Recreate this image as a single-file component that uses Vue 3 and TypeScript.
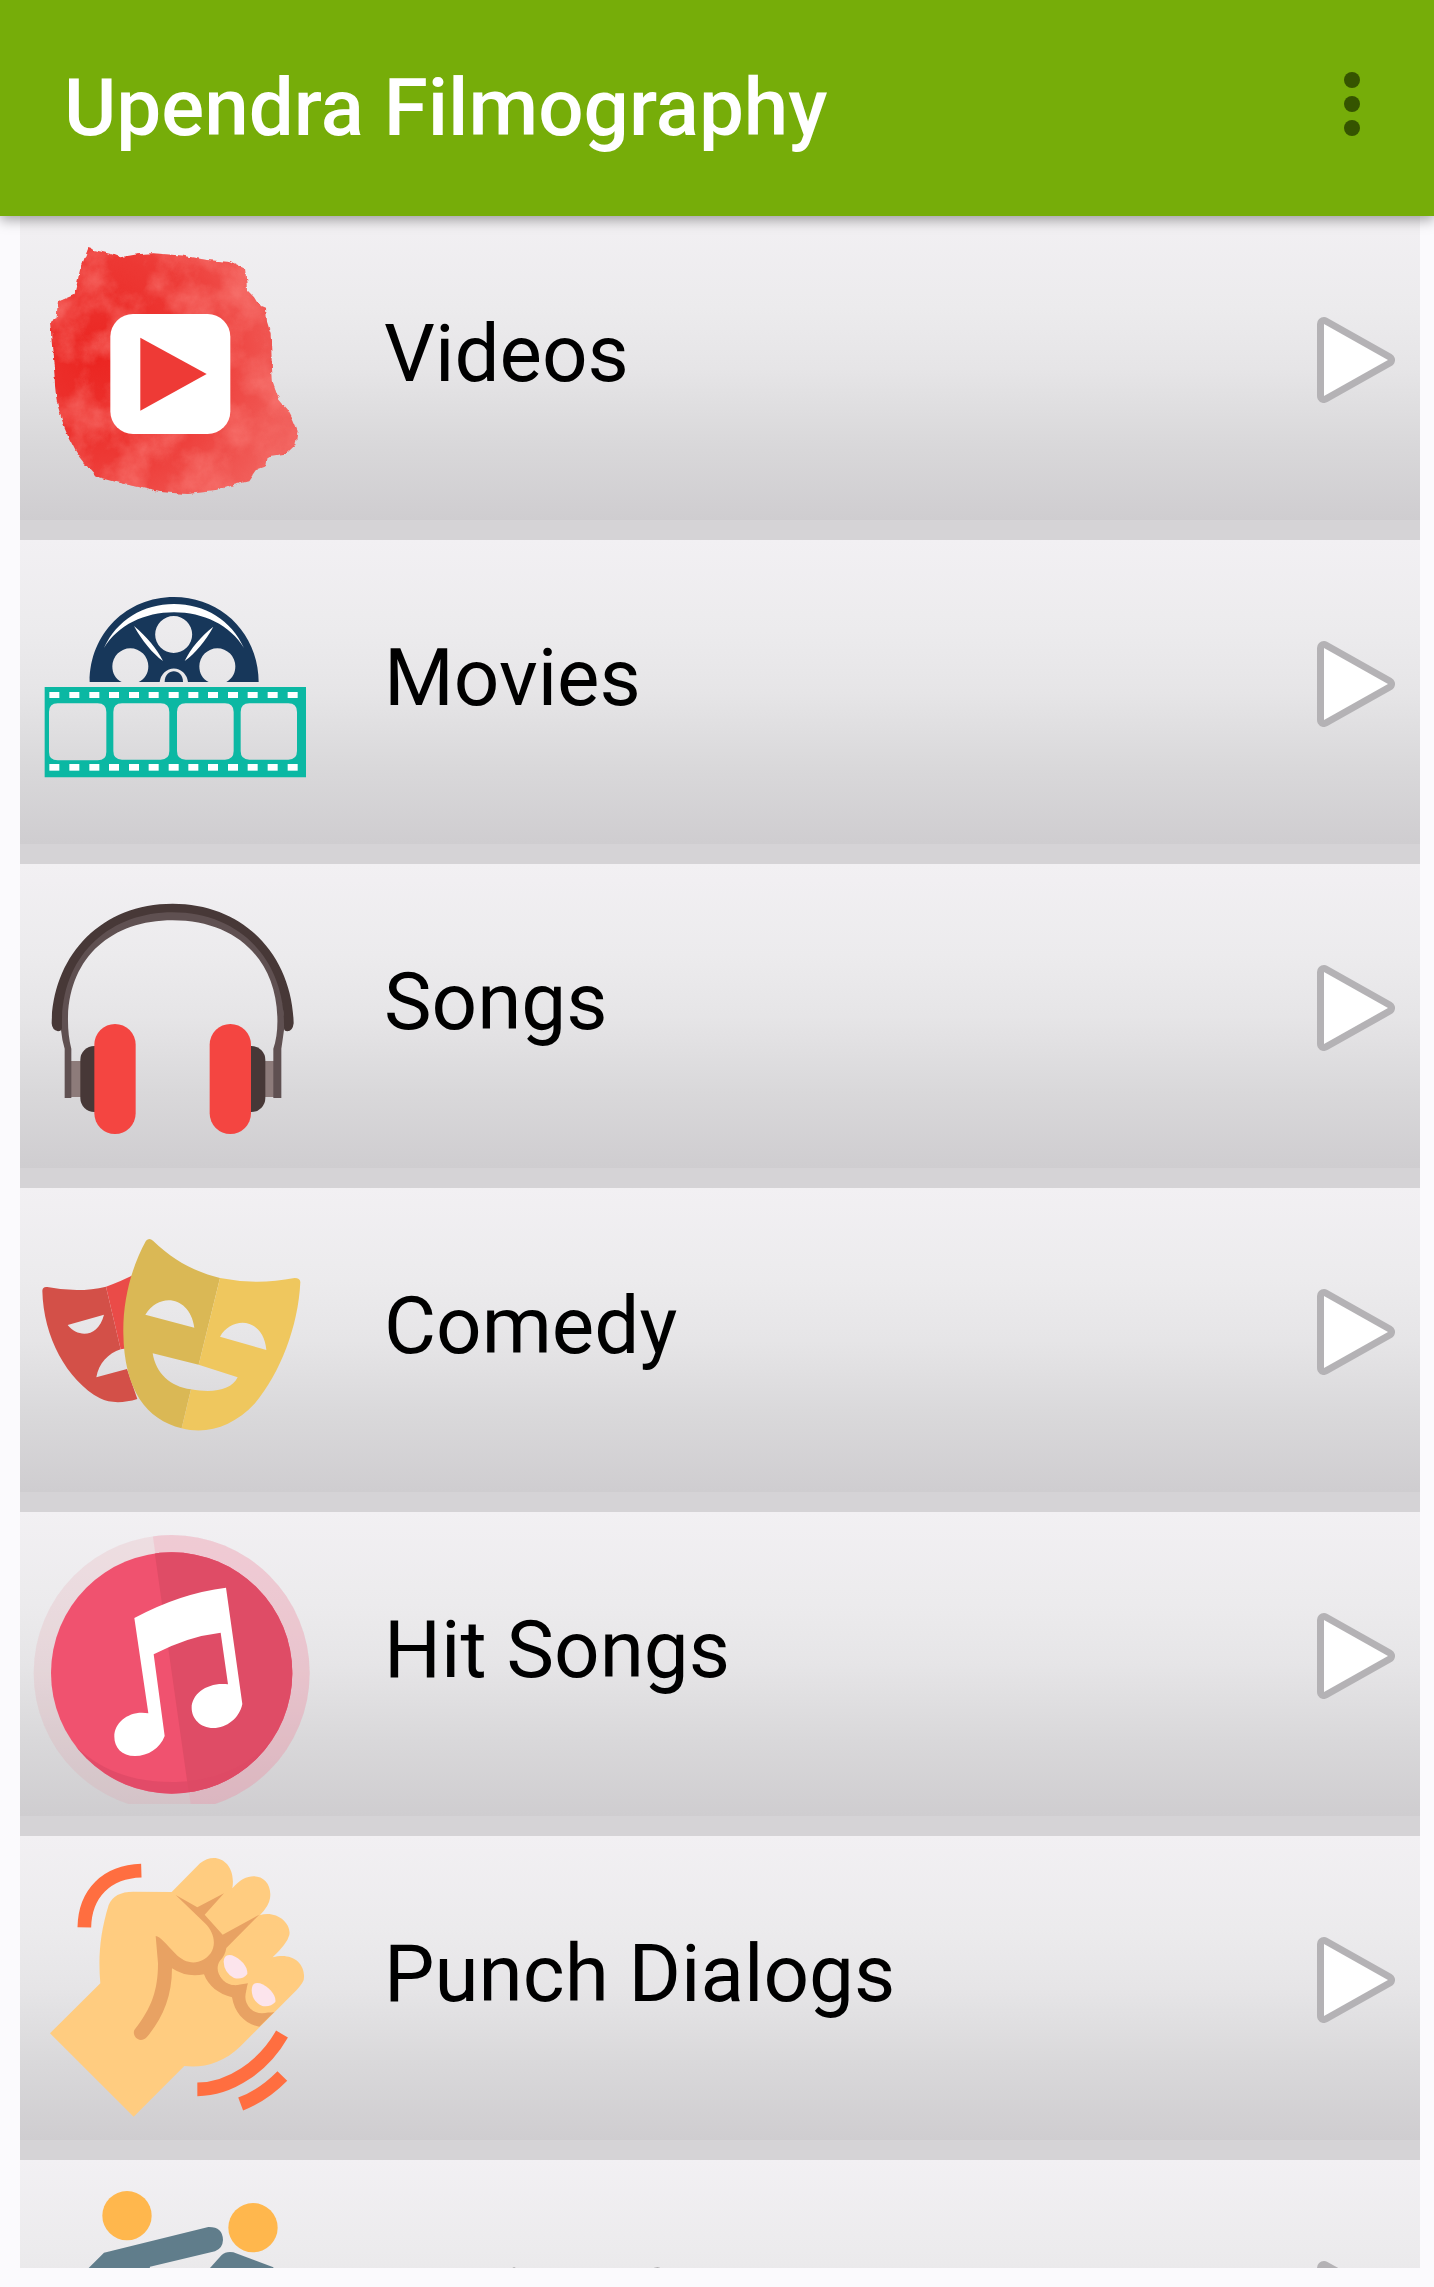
<script setup lang="ts">
interface Category {
  id: string
  label: string
  viewBox: string
}

const categories: Category[] = [
  { id: 'videos', label: 'Videos', viewBox: '60 18 960 912' },
  { id: 'movies', label: 'Movies', viewBox: '60 0 960 912' },
  { id: 'songs', label: 'Songs', viewBox: '60 12 960 912' },
  { id: 'comedy', label: 'Comedy', viewBox: '60 -6 960 912' },
  { id: 'hit-songs', label: 'Hit Songs', viewBox: '60 36 960 912' },
  { id: 'punch-dialogs', label: 'Punch Dialogs', viewBox: '60 48 960 912' },
  { id: 'action-scenes', label: 'Action Scenes', viewBox: '60 60 960 912' },
]

const perforations: number[] = [148, 208, 268, 327, 387, 446, 506, 565, 624, 684, 743, 803, 863]
</script>

<template>
  <div class="screen">
    <header class="toolbar">
      <h1 class="title">Upendra Filmography</h1>
      <button class="overflow" type="button" aria-label="More options">
        <svg width="16" height="64" viewBox="0 0 16 64" aria-hidden="true">
          <circle cx="8" cy="8" r="8" />
          <circle cx="8" cy="32" r="8" />
          <circle cx="8" cy="56" r="8" />
        </svg>
      </button>
    </header>

    <nav class="list">
      <a v-for="item in categories" :key="item.id" class="row" :href="'#' + item.id">
        <svg class="icon" :viewBox="item.viewBox" aria-hidden="true">
          <!-- watercolour blot with play tile -->
          <template v-if="item.id === 'videos'">
            <defs>
              <filter id="paint" x="-5%" y="-5%" width="110%" height="110%" color-interpolation-filters="sRGB">
                <feTurbulence type="fractalNoise" baseFrequency="0.04" numOctaves="3" seed="4" result="edge" />
                <feDisplacementMap in="SourceGraphic" in2="edge" scale="14" xChannelSelector="R" yChannelSelector="G" result="shape" />
                <feTurbulence type="fractalNoise" baseFrequency="0.009" numOctaves="6" seed="9" />
                <feColorMatrix values="0 0 0 0 0.98  0 0 0 0 0.5  0 0 0 0 0.48  1.3 0 0 0 -0.48" result="grain" />
                <feComposite in="grain" in2="shape" operator="in" result="wash" />
                <feMerge>
                  <feMergeNode in="shape" />
                  <feMergeNode in="wash" />
                </feMerge>
              </filter>
              <radialGradient id="blot" gradientUnits="userSpaceOnUse" cx="290" cy="440" r="600">
                <stop offset="0" stop-color="#eb2521" />
                <stop offset="0.5" stop-color="#ed3834" />
                <stop offset="1" stop-color="#f15f5b" />
              </radialGradient>
            </defs>
            <path
              filter="url(#paint)"
              fill="url(#blot)"
              d="M265 114L282 120L335 133L358 142L410 133L460 130L550 137L620 150L690 156L735 176L741 240L762 262L778 288L798 296L801 335L812 370L815 450L818 515L838 570L862 598L878 628L893 664L886 705L855 734L803 742L798 768L770 778L745 814L700 825L650 842L560 852L480 846L400 828L350 816L290 800L270 778Q235 745 215 700Q190 655 180 610Q164 560 164 500L158 430L150 332L170 325L174 274L224 252L240 180Z"
            />
            <rect x="331" y="312" width="360" height="360" rx="68" fill="#fff" />
            <path d="M421 383L620 492L421 602Z" fill="#ee3a36" />
          </template>

          <!-- film reel and strip -->
          <template v-else-if="item.id === 'movies'">
            <path
              fill="#17375a"
              fill-rule="evenodd"
              d="M269 426C269 280 380 171 522 171S775 280 776 426H679C699 415 706 398 706 379A54 54 0 0 0 598 379C598 400 607 417 626 426H564A43 48 0 0 0 479 426H416C435 417 445 400 445 379A54 54 0 0 0 337 379C337 400 346 417 365 426ZM521 228A55 55 0 1 0 521 339A55 55 0 1 0 521 228Z"
            />
            <path d="M312 324C350 240 430 192 522 192S694 240 732 324C690 255 610 217 522 217S354 255 312 324Z" fill="#fff" />
            <path d="M402 258C440 290 470 325 489 363C457 340 426 302 402 258ZM640 260C602 290 572 325 554 363C586 340 617 302 640 260Z" fill="#fff" />
            <path d="M494 426C494 383 549 383 549 426Z" fill="#17375a" />
            <path
              fill="#0bb8a3"
              fill-rule="evenodd"
              d="M134 441H918V712H134ZM173 490Q147 490 147 516V636Q147 661 173 661H293Q319 661 319 636V516Q319 490 293 490ZM366 490Q340 490 340 516V633Q340 659 366 659H482Q508 659 508 633V516Q508 490 482 490ZM557 490Q531 490 531 516V633Q531 659 557 659H675Q701 659 701 633V516Q701 490 675 490ZM748 490Q722 490 722 516V633Q722 659 748 659H865Q891 659 891 633V516Q891 490 865 490Z"
            />
            <g fill="#fff">
              <rect v-for="x in perforations" :key="'t' + x" :x="x" y="456" width="30" height="18" />
              <rect v-for="x in perforations" :key="'b' + x" :x="x" y="672" width="30" height="20" />
            </g>
          </template>

          <!-- headphones -->
          <template v-else-if="item.id === 'songs'">
            <g fill="#8d7b7a">
              <rect x="212" y="603" width="34" height="108" />
              <rect x="790" y="603" width="34" height="108" />
            </g>
            <path
              fill="#5f5051"
              d="M183 510C175 300 290 150 518 150S861 300 852 510Q848 540 844 566V714H820V566Q834 525 832 470C826 290 700 181 518 181S210 290 204 470Q203 525 214 566V714H194V566Q186 540 183 510Z"
            />
            <path
              fill="#473837"
              d="M155 490C158 290 300 131 518 131S876 290 881 490Q878 514 862 514Q852 514 852 505C856 290 710 157 518 157S179 290 186 505Q184 514 174 514Q156 510 155 490Z"
            />
            <rect x="241" y="558" width="90" height="198" rx="42" fill="#473837" />
            <rect x="706" y="558" width="90" height="198" rx="42" fill="#473837" />
            <rect x="283" y="492" width="124" height="330" rx="62" fill="#f44541" />
            <rect x="629" y="492" width="124" height="330" rx="62" fill="#f44541" />
          </template>

          <!-- theatre masks -->
          <template v-else-if="item.id === 'comedy'">
            <path
              fill="#d35048"
              fill-rule="evenodd"
              d="M127 302Q128 289 142 291Q235 310 318 290L362 478C325 490 296 520 289 562L381 537L412 627C370 640 330 640 300 625C200 570 130 440 127 302ZM203 405C235 445 295 442 312 374Z"
            />
            <path d="M318 290Q360 276 410 250V470L362 478Z" fill="#ea4b48" />
            <path
              fill="#dab855"
              fill-rule="evenodd"
              d="M438 152Q448 142 459 152C520 210 580 244 660 264L596 524L458 490C468 550 510 590 573 598L545 715C440 690 372 600 370 430C368 330 395 230 438 152ZM436 374L583 413C570 320 480 305 436 374Z"
            />
            <path
              fill="#efc75e"
              fill-rule="evenodd"
              d="M660 264Q770 286 884 264Q900 264 901 276C895 410 840 550 765 640C700 710 620 735 545 715L573 598C640 610 695 600 713 562L596 524ZM660 440L799 480C792 385 698 375 660 440Z"
            />
          </template>

          <!-- music note badge -->
          <template v-else-if="item.id === 'hit-songs'">
            <defs>
              <clipPath id="halo-clip"><path d="M60 60H1020V912H60Z" /></clipPath>
              <clipPath id="disc-clip"><circle cx="515" cy="519" r="362" /></clipPath>
              <clipPath id="half-clip"><path d="M456 90H1020V912H572Z" /></clipPath>
            </defs>
            <g clip-path="url(#halo-clip)">
              <circle cx="515" cy="519" r="414" fill="#e2919c" fill-opacity="0.18" />
              <g clip-path="url(#half-clip)">
                <circle cx="515" cy="519" r="414" fill="#f48aa5" fill-opacity="0.22" />
              </g>
            </g>
            <g clip-path="url(#disc-clip)">
              <path d="M150 150H880V890H150Z" fill="#f0526f" />
              <path d="M463 150H880V890H568Z" fill="#df4c66" />
              <path d="M150 640C240 790 370 850 530 846S820 760 880 620V890H150Z" fill="#de4a65" fill-opacity="0.75" />
            </g>
            <path
              fill="#fff"
              d="M403 354Q540 280 678 263L727 612C718 655 680 684 640 684C600 684 575 655 575 624C575 580 625 545 684 553L662 398Q560 410 461 463L494 708C480 745 445 768 405 768C365 768 343 742 343 710C343 665 390 630 445 640Z"
            />
          </template>

          <!-- clenched fist -->
          <template v-else-if="item.id === 'punch-dialogs'">
            <g fill="none" stroke="#ff6e40" stroke-width="41">
              <path d="M253 322C255 220 320 155 424 152" />
              <path d="M592 808C690 808 790 740 846 642" />
              <path d="M722 852Q790 826 847 768" />
            </g>
            <path
              fill="#ffcc80"
              d="M150 640L301 490C294 410 300 340 326 255Q342 215 400 215L515 216L600 130C650 90 710 130 697 205C750 140 820 170 810 235Q807 258 780 285C830 270 875 310 868 345Q862 370 818 412C875 395 920 430 911 480Q908 490 890 510L720 680C670 728 610 745 553 738L401 890Z"
            />
            <path
              fill="#e8a263"
              d="M527 225L592 262L672 220L614 284L668 344L778 284L679 384Q675 408 660 422C640 452 664 490 706 496L744 490C725 540 770 588 823 576L778 620C735 612 704 580 696 532C656 522 625 498 612 463Q560 474 516 445C516 530 488 595 440 652C420 672 395 650 403 630C455 565 474 510 474 430L467 348C480 348 500 374 525 400C560 438 605 435 632 400C651 370 640 335 615 310Z"
            />
            <circle cx="703" cy="449" r="46" fill="#ffcc80" />
            <circle cx="786" cy="530" r="50" fill="#ffcc80" />
            <path d="M671 425Q672 400 696 406C722 416 744 440 742 462Q728 480 702 474Q672 458 671 425Z" fill="#fce4ec" />
            <path d="M755 510Q756 484 780 490C806 500 830 526 826 546Q812 562 787 558Q756 545 755 510Z" fill="#fce4ec" />
          </template>

          <!-- two fighters -->
          <template v-else>
            <circle cx="381" cy="227" r="74" fill="#ffb74d" />
            <circle cx="759" cy="263" r="74" fill="#ffb74d" />
            <path
              fill="#607d8b"
              d="M312 338L625 261Q668 260 669 300Q668 325 645 334L450 380L420 560H240L266 384Z"
            />
            <path fill="#607d8b" d="M630 384L665 345Q678 333 700 337L820 382L860 560H600Z" />
          </template>
        </svg>

        <span class="label">{{ item.label }}</span>

        <svg class="arrow" viewBox="0 0 78 86" aria-hidden="true">
          <path d="M7 7L71 43L7 79Z" />
        </svg>
      </a>
    </nav>
  </div>
</template>

<style>
body {
  margin: 0;
  background: #fbfafd;
}
</style>

<style scoped>
.screen {
  display: flex;
  flex-direction: column;
  height: 100vh;
  font-family: Roboto, "Liberation Sans", sans-serif;
  background: #fbfafd;
}

.toolbar {
  display: flex;
  flex: none;
  align-items: center;
  justify-content: space-between;
  box-sizing: border-box;
  height: 216px;
  padding: 0 64px;
  background: #76ad09;
  box-shadow: 0 4px 12px rgba(0, 0, 0, 0.35);
  z-index: 1;
}

.title {
  margin: 0;
  font-size: 80px;
  font-weight: 500;
  line-height: 96px;
  color: #fff;
}

.overflow {
  display: flex;
  margin: 0 0 8px;
  padding: 0 10px;
  border: 0;
  background: none;
  cursor: pointer;
}

.overflow svg {
  fill: #355400;
}

.list {
  flex: 1;
  min-height: 0;
  margin: 0 14px 19px 20px;
  overflow-y: auto;
  scrollbar-width: none;
}

.row {
  display: flex;
  align-items: center;
  height: 304px;
  padding-right: 25px;
  border-bottom: 20px solid #d5d3d6;
  background: linear-gradient(#f2f0f3, #ecebed 30%, #e6e5e7 50%, #d9d8da 75%, #cfcdd0) padding-box;
  color: #000;
  text-decoration: none;
}

.icon {
  flex: none;
  width: 320px;
  height: 304px;
}

.label {
  flex: 1;
  margin: 0 0 28px 44px;
  font-size: 80px;
  line-height: 96px;
}

.arrow {
  flex: none;
  width: 78px;
  height: 86px;
  margin-bottom: 16px;
  fill: #fff;
  stroke: #b4b2b5;
  stroke-width: 14;
  stroke-linejoin: round;
  paint-order: stroke;
}
</style>
